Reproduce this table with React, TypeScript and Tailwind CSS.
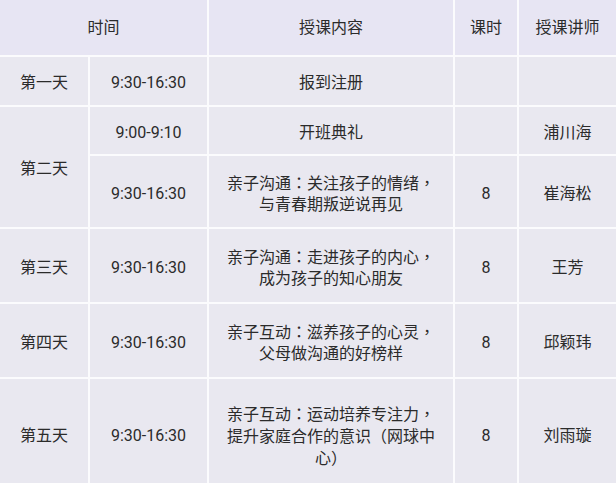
const font = { fontFamily: "Roboto, 'Noto Sans CJK SC', sans-serif" }

// full-width punctuation sits centred in the reference, as in the TC cut
function P({ c }: { c: string }) {
  return <span className="[font-family:'Noto_Sans_CJK_TC',sans-serif]">{c}</span>
}

function Line({ text }: { text: string }) {
  const parts = text.split(/([：，（）])/).filter(Boolean)
  return (
    <div>
      {parts.map((p, i) => ("：，（）".includes(p) ? <P key={i} c={p} /> : <span key={i}>{p}</span>))}
    </div>
  )
}

function Cell({ children, className = "" }: { children?: React.ReactNode; className?: string }) {
  return (
    <div className={`flex items-center justify-center text-center bg-[#e9e8f0] text-[#2b2b2b] pt-[3px] ${className}`}>
      {children}
    </div>
  )
}

function Head({ children, className = "" }: { children?: React.ReactNode; className?: string }) {
  return (
    <div className={`flex items-center justify-center bg-[#e7e5f3] text-[#2b2b2b] ${className}`}>{children}</div>
  )
}

const days = [
  { day: "第三天", content: ["亲子沟通：走进孩子的内心，", "成为孩子的知心朋友"], teacher: "王芳" },
  { day: "第四天", content: ["亲子互动：滋养孩子的心灵，", "父母做沟通的好榜样"], teacher: "邱颖玮" },
  { day: "第五天", content: ["亲子互动：运动培养专注力，", "提升家庭合作的意识（网球中", "心）"], teacher: "刘雨璇" },
]

export default function App() {
  return (
    <div className="w-[616px] h-[483px] overflow-hidden bg-white text-[16px] leading-[21px]" style={font}>
      <div className="grid grid-cols-[88px_117px_244px_62px_1fr] grid-rows-[55px_48px_47px_71px_73px_73px_110px] gap-[2px] bg-[#fbfbfd]">
        {/* header */}
        <Head className="col-span-2">时间</Head>
        <Head>授课内容</Head>
        <Head>课时</Head>
        <Head>授课讲师</Head>

        {/* day 1 */}
        <Cell>第一天</Cell>
        <Cell>9:30-16:30</Cell>
        <Cell>报到注册</Cell>
        <Cell />
        <Cell />

        {/* day 2 */}
        <Cell className="row-span-2">第二天</Cell>
        <Cell>9:00-9:10</Cell>
        <Cell>开班典礼</Cell>
        <Cell />
        <Cell>浦川海</Cell>
        <Cell>9:30-16:30</Cell>
        <Cell className="px-[12px]">
          <div>
            <Line text="亲子沟通：关注孩子的情绪，" />
            <Line text="与青春期叛逆说再见" />
          </div>
        </Cell>
        <Cell>8</Cell>
        <Cell>崔海松</Cell>

        {days.map((d) => (
          <>
            <Cell key={d.day}>{d.day}</Cell>
            <Cell key={d.day + "t"}>9:30-16:30</Cell>
            <Cell key={d.day + "c"} className="px-[12px]">
              <div>
                {d.content.map((l) => (
                  <Line key={l} text={l} />
                ))}
              </div>
            </Cell>
            <Cell key={d.day + "h"}>8</Cell>
            <Cell key={d.day + "n"}>{d.teacher}</Cell>
          </>
        ))}
      </div>
    </div>
  )
}
